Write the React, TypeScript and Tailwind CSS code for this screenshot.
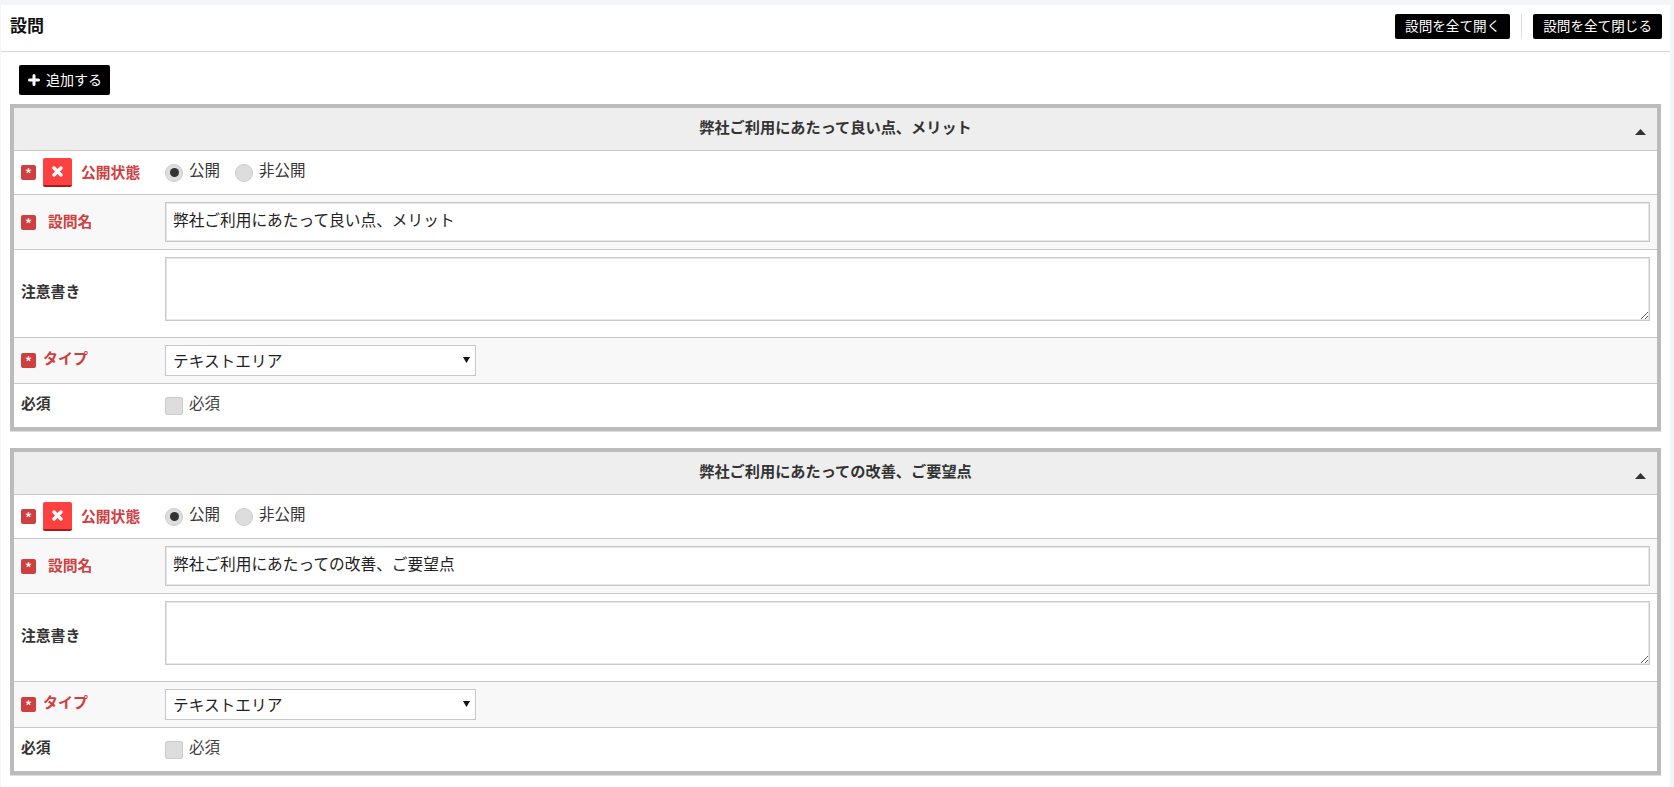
const FONT = "font-['Meiryo','Noto_Sans_CJK_JP','Noto_Sans_CJK_SC',sans-serif]";

const BlackButton = ({ label }: { label: string }) => (
  <button className="h-[25px] rounded-[2px] bg-black px-[10px] pb-[3px] text-[13.6px] leading-[22px] text-white">{label}</button>
);

const Required = () => (
  <span className="flex h-[15px] w-[15px] shrink-0 items-start justify-center rounded-[2px] bg-[#cf3f3f] text-[16px] leading-[19px] text-white">*</span>
);

const Radio = ({ checked, label }: { checked?: boolean; label: string }) => (
  <span className="flex items-center">
    <span className="flex h-[18px] w-[18px] items-center justify-center rounded-full border border-[#ccc] bg-[#ddd]">
      {checked && <span className="h-[9px] w-[9px] rounded-full bg-[#333]" />}
    </span>
    <span className="ml-[6px] pb-[7px] text-[15.5px] leading-[18px] text-[#333]">{label}</span>
  </span>
);

const QuestionCard = ({ title }: { title: string }) => (
  <div className="border-4 border-[#bbb] shadow-[0_1px_0_#ddd]">
    <div className="relative flex h-[43px] items-center justify-center border-b border-[#c8c8c8] bg-[#eee] pb-[6px] text-[15.2px] font-bold text-[#333]">
      {title}
      <svg className="absolute right-[11px] top-[21px]" width="11" height="6" viewBox="0 0 11 6">
        <path d="M5.5 0L11 6H0z" fill="#333" />
      </svg>
    </div>

    {/* 公開状態 */}
    <div className="flex h-[44px] items-center border-b border-[#c8c8c8] bg-white pl-[7px]">
      <div className="flex w-[144px] items-center">
        <Required />
        <span className="ml-[7px] flex h-[29px] w-[29px] items-center justify-center rounded-[2px] border-b-2 border-[#a51c1c] bg-[#ff4040]">
          <svg width="11" height="11" viewBox="0 0 11 11">
            <path d="M2 2L9 9M9 2L2 9" stroke="#fff" strokeWidth="3.4" strokeLinecap="round" />
          </svg>
        </span>
        <span className="ml-[9px] pb-[1px] text-[14.8px] font-bold text-[#cf3f3f]">公開状態</span>
      </div>
      <div className="flex gap-[15px]">
        <Radio checked label="公開" />
        <Radio label="非公開" />
      </div>
    </div>

    {/* 設問名 */}
    <div className="flex h-[55px] items-center border-b border-[#c8c8c8] bg-[#f8f8f8] pl-[7px] pr-[7px]">
      <div className="flex w-[144px] shrink-0 items-center">
        <span className="mt-[1px]"><Required /></span>
        <span className="ml-[12px] pb-[1px] text-[14.8px] font-bold text-[#cf3f3f]">設問名</span>
      </div>
      <input
        readOnly
        value={title}
        className="h-[40px] flex-1 border border-[#c8c8c8] bg-white px-[7px] pb-[6px] text-[15.7px] text-[#222] shadow-[inset_0_0_0_1px_#e6e6e6] outline-none"
      />
    </div>

    {/* 注意書き */}
    <div className="flex h-[88px] border-b border-[#c8c8c8] bg-white pl-[7px] pr-[7px] pt-[7px]">
      <div className="flex h-[64px] w-[144px] shrink-0 items-center pt-[4px] text-[14.8px] font-bold text-[#333]">注意書き</div>
      <textarea readOnly className="block h-[64px] flex-1 border border-[#c8c8c8] bg-white shadow-[inset_0_0_0_1px_#e6e6e6] outline-none" />
    </div>

    {/* タイプ */}
    <div className="flex h-[46px] items-center border-b border-[#c8c8c8] bg-[#f8f8f8] pl-[7px]">
      <div className="flex w-[144px] shrink-0 items-center">
        <Required />
        <span className="ml-[7px] pb-[4px] text-[15px] font-bold text-[#cf3f3f]">タイプ</span>
      </div>
      <div className="relative h-[31px] w-[311px]">
        <select className="h-full w-full appearance-none border border-[#c8c8c8] bg-white px-[7px] text-[15.7px] text-[#222] outline-none">
          <option>テキストエリア</option>
        </select>
        <svg className="absolute right-[6px] top-[12px]" width="7" height="6" viewBox="0 0 7 6">
          <path d="M0 0H7L3.5 6z" fill="#111" />
        </svg>
      </div>
    </div>

    {/* 必須 */}
    <div className="flex h-[43px] items-center bg-white pl-[7px]">
      <div className="w-[144px] shrink-0 pb-[5px] text-[14.8px] font-bold text-[#333]">必須</div>
      <span className="h-[18px] w-[18px] rounded-[2px] border border-[#ccc] bg-[#ddd]" />
      <span className="ml-[6px] pb-[5px] text-[15.5px] text-[#444]">必須</span>
    </div>
  </div>
);

export default function App() {
  return (
    <div className={`h-[787px] overflow-hidden bg-[#f3f6f9] pl-px pr-[4px] pt-[5px] ${FONT}`}>
      <div className="h-full bg-white">
        <div className="flex h-[47px] items-center justify-between border-b border-[#d5d5d5] pl-[9px] pr-[8px]">
          <h2 className="pb-[7px] text-[17px] font-bold text-[#111]">設問</h2>
          <div className="flex items-center pb-[3px]">
            <BlackButton label="設問を全て開く" />
            <span className="mx-[11px] h-[25px] w-px bg-[#ddd]" />
            <BlackButton label="設問を全て閉じる" />
          </div>
        </div>
        <div className="pl-[18px] pt-[13px]">
          <button className="flex h-[30px] items-center rounded-[2px] bg-black pl-[9px] pr-[8px] text-[14px] text-white">
            <svg width="12" height="12" viewBox="0 0 12 12">
              <path d="M6 1.5V10.5M1.5 6H10.5" stroke="#fff" strokeWidth="3" strokeLinecap="round" />
            </svg>
            <span className="ml-[6px] pb-[2px]">追加する</span>
          </button>
        </div>
        <div className="flex flex-col gap-[17px] pl-[9px] pr-[9px] pt-[9px]">
          <QuestionCard title="弊社ご利用にあたって良い点、メリット" />
          <QuestionCard title="弊社ご利用にあたっての改善、ご要望点" />
        </div>
      </div>
    </div>
  );
}
